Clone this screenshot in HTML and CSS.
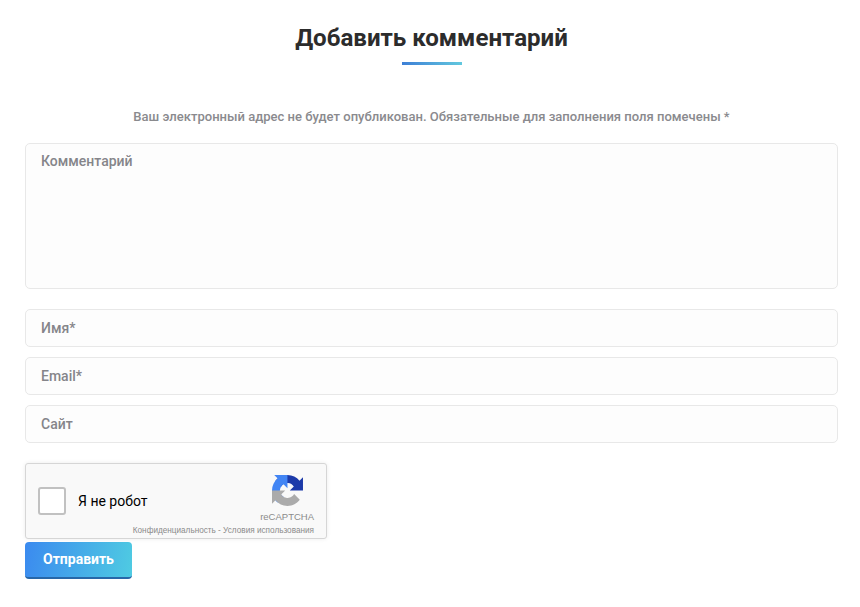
FILE: index.html
```html
<!DOCTYPE html>
<html lang="ru">
<head>
<meta charset="utf-8">
<title>Добавить комментарий</title>
<link rel="stylesheet" href="styles.css">
</head>
<body>
<form class="comment-form">
  <h2 class="title">Добавить комментарий</h2>
  <div class="title-rule"></div>
  <p class="note">Ваш электронный адрес не будет опубликован. Обязательные для заполнения поля помечены *</p>
  <div class="field area">Комментарий</div>
  <div class="inputs">
    <div class="field line">Имя*</div>
    <div class="field line">Email*</div>
    <div class="field line">Сайт</div>
  </div>
  <div class="captcha">
    <span class="check"></span>
    <span class="robot">Я не робот</span>
    <div class="brand">
      <svg class="logo" width="31" height="31" viewBox="0 0 64 64">
        <path fill="#1c3aa9" d="M64 31.955l-.033-1.37V4.687l-7.16 7.16C50.948 4.674 42.033.093 32.05.093c-10.4 0-19.622 4.96-25.458 12.64l11.736 11.86a15.55 15.55 0 0 1 4.754-5.334c2.05-1.6 4.952-2.906 8.968-2.906.485 0 .86.07 1.124.203 4.994.396 9.323 3.15 11.87 7.16l-8.307 8.307c10.522-.04 22.4-.066 27.295.005"/>
        <path fill="#4285f4" d="M31.9.002l-1.37.033H4.632l7.16 7.16C4.6 12.998.02 21.913.02 31.897c0 10.4 4.96 19.622 12.64 25.458l11.86-11.736a15.55 15.55 0 0 1-5.334-4.754c-1.6-2.05-2.906-4.952-2.906-8.968 0-.485.07-.86.203-1.124.396-4.994 3.15-9.323 7.16-11.87l8.307 8.307c-.04-10.522-.066-22.4.005-27.295"/>
        <path fill="#ababab" d="M0 31.9l.033 1.37v25.9l7.16-7.16c5.86 7.173 14.774 11.754 24.76 11.754 10.4 0 19.622-4.96 25.458-12.64L45.675 39.26a15.55 15.55 0 0 1-4.754 5.334c-2.05 1.6-4.952 2.906-8.968 2.906-.485 0-.86-.07-1.124-.203-4.994-.396-9.323-3.15-11.87-7.16l8.307-8.307c-10.522.04-22.4.066-27.295-.005"/>
      </svg>
      <span class="brand-name">reCAPTCHA</span>
    </div>
    <span class="legal">Конфиденциальность - Условия использования</span>
  </div>
  <button class="submit" type="button">Отправить</button>
</form>
</body>
</html>
```
FILE: styles.css
```css
* { box-sizing: border-box; }
body {
  margin: 0;
  background: #fff;
  font-family: Roboto, "Liberation Sans", sans-serif;
}
.comment-form {
  display: flex;
  flex-direction: column;
  padding: 22px 22px 0 25px;
}
.title {
  margin: 0;
  font-size: 24.08px;
  line-height: 32px;
  font-weight: 700;
  color: #2c2c2c;
  text-align: center;
}
.title-rule {
  align-self: center;
  width: 60px;
  height: 3px;
  margin-top: 8px;
  background: linear-gradient(90deg, #3d7fd6, #62c8de);
}
.note {
  margin: 42px 0 0;
  font-size: 13.04px;
  line-height: 20px;
  font-weight: 500;
  color: #8a8a8e;
  text-align: center;
}
.field {
  border: 1px solid #e8e8e8;
  border-radius: 5px;
  background: #fdfdfd;
  padding: 0 15px;
  font-size: 14px;
  font-weight: 500;
  color: #85858a;
}
.area {
  height: 146px;
  margin-top: 16px;
  padding-top: 7px;
  line-height: 20px;
}
.inputs {
  display: flex;
  flex-direction: column;
  gap: 10px;
  margin-top: 20px;
}
.line {
  height: 38px;
  line-height: 36px;
}
.captcha {
  position: relative;
  display: flex;
  align-items: center;
  width: 302px;
  height: 76px;
  margin-top: 20px;
  padding-left: 12px;
  border: 1px solid #d6d6d6;
  border-radius: 3px;
  background: #f9f9f9;
  box-shadow: 0 0 4px rgba(0, 0, 0, .08);
  font-family: "Liberation Sans", Arial, sans-serif;
}
.check {
  width: 28px;
  height: 28px;
  border: 2px solid #c1c1c1;
  border-radius: 3px;
  background: #fff;
}
.robot {
  margin-left: 12px;
  font-family: Roboto, sans-serif;
  font-size: 14px;
  color: #000;
}
.brand {
  position: absolute;
  top: 11px;
  right: 12px;
  display: flex;
  flex-direction: column;
  align-items: center;
}
.logo { display: block; }
.brand-name {
  margin-top: 5px;
  font-size: 9.5px;
  line-height: 12px;
  color: #8b8b8b;
}
.legal {
  position: absolute;
  right: 12px;
  bottom: 2px;
  font-size: 8.2px;
  line-height: 10px;
  color: #8b8b8b;
}
.submit {
  align-self: flex-start;
  width: 107px;
  height: 37px;
  margin-top: 3px;
  padding: 0 0 1px;
  border: 0;
  border-bottom: 2px solid #2767a8;
  border-radius: 4px;
  background: linear-gradient(100deg, #3b8aef, #4fcbe2);
  font-family: Roboto, sans-serif;
  font-size: 14px;
  font-weight: 700;
  color: #fff;
}
```
